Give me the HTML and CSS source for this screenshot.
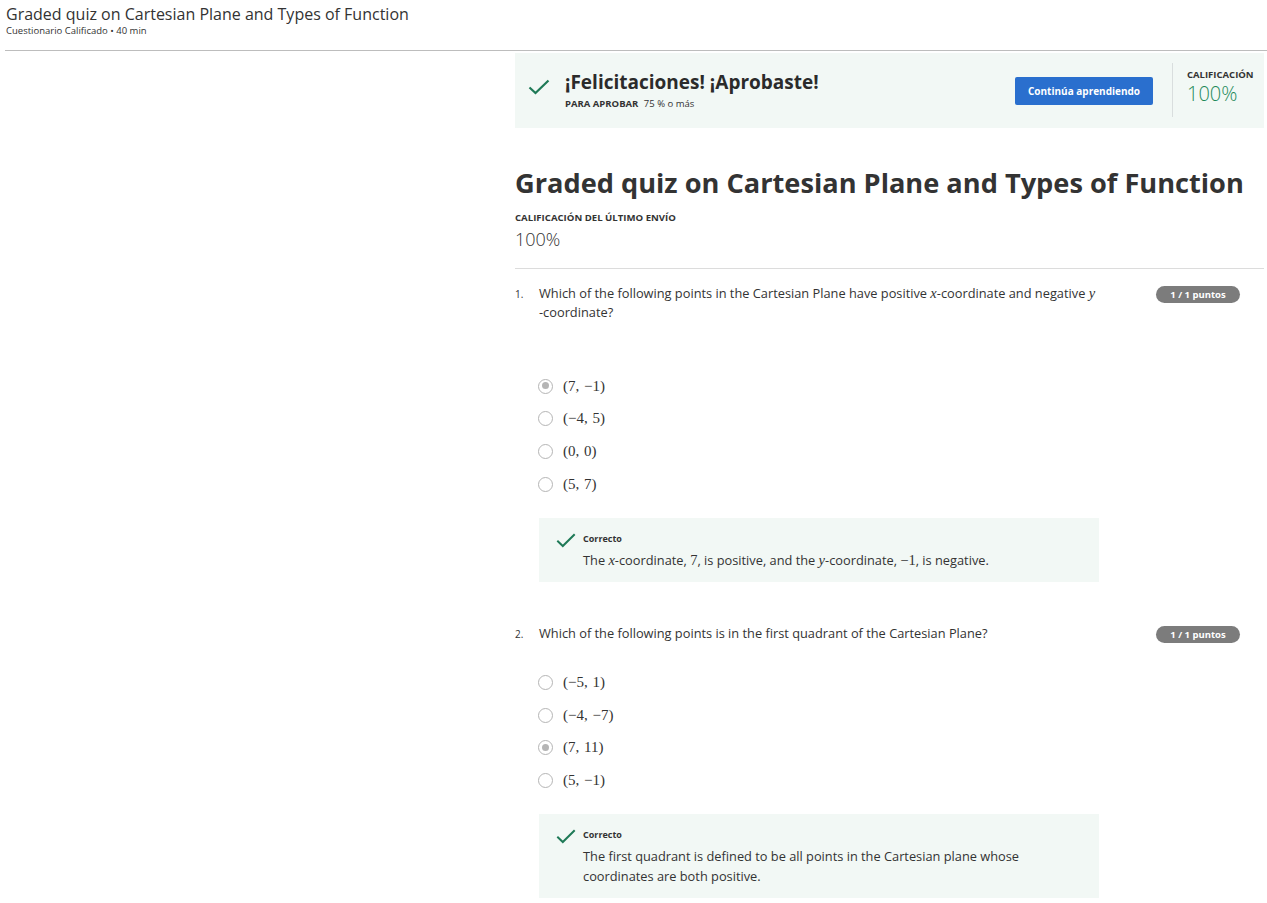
FILE: index.html
```html
<!DOCTYPE html>
<html lang="es">
<head>
<meta charset="utf-8">
<title>Graded quiz</title>
<link rel="stylesheet" href="styles.css">
</head>
<body>
<header class="topbar">
  <h1 class="top-title">Graded quiz on Cartesian Plane and Types of Function</h1>
  <div class="top-sub">Cuestionario Calificado • 40 min</div>
</header>
<main class="main">
  <section class="banner">
    <svg class="banner-check" width="22" height="16" viewBox="0 0 22 16"><path d="M1.5 8.5 L7.5 14 L20.5 1.5" fill="none" stroke="#1f7a57" stroke-width="2.2"/></svg>
    <div class="banner-text">
      <div class="banner-title">¡Felicitaciones! ¡Aprobaste!</div>
      <div class="banner-pass"><b>PARA APROBAR</b> 75 % o más</div>
    </div>
    <button class="btn">Continúa aprendiendo</button>
    <div class="banner-grade">
      <div class="label grade-label">CALIFICACIÓN</div>
      <div class="grade-val">100%</div>
    </div>
  </section>

  <h2 class="quiz-title">Graded quiz on Cartesian Plane and Types of Function</h2>
  <div class="label last-label">CALIFICACIÓN DEL ÚLTIMO ENVÍO</div>
  <div class="last-val">100%</div>

  <div class="questions">
    <section class="question q1">
      <div class="q-head">
        <span class="q-num">1.</span>
        <div class="q-text">Which of the following points in the Cartesian Plane have positive <span class="m"><i>x</i></span>-coordinate and negative <span class="m"><i>y</i></span><span class="nw">-coordinate?</span></div>
        <span class="badge">1 / 1 puntos</span>
      </div>
      <ul class="options">
        <li><span class="radio on"></span><span class="m">(7, −1)</span></li>
        <li><span class="radio"></span><span class="m">(−4, 5)</span></li>
        <li><span class="radio"></span><span class="m">(0, 0)</span></li>
        <li><span class="radio"></span><span class="m">(5, 7)</span></li>
      </ul>
      <div class="feedback">
        <svg class="fb-check" width="20" height="15" viewBox="0 0 20 15"><path d="M1.3 7.8 L6.8 13 L18.7 1.3" fill="none" stroke="#1f7a57" stroke-width="2"/></svg>
        <div class="fb-body">
          <div class="fb-label">Correcto</div>
          <div class="fb-text">The <span class="m"><i>x</i></span>-coordinate, <span class="m">7</span>, is positive, and the <span class="m"><i>y</i></span>-coordinate, <span class="m">−1</span>, is negative.</div>
        </div>
      </div>
    </section>

    <section class="question q2">
      <div class="q-head">
        <span class="q-num">2.</span>
        <div class="q-text">Which of the following points is in the first quadrant of the Cartesian Plane?</div>
        <span class="badge">1 / 1 puntos</span>
      </div>
      <ul class="options">
        <li><span class="radio"></span><span class="m">(−5, 1)</span></li>
        <li><span class="radio"></span><span class="m">(−4, −7)</span></li>
        <li><span class="radio on"></span><span class="m">(7, 11)</span></li>
        <li><span class="radio"></span><span class="m">(5, −1)</span></li>
      </ul>
      <div class="feedback">
        <svg class="fb-check" width="20" height="15" viewBox="0 0 20 15"><path d="M1.3 7.8 L6.8 13 L18.7 1.3" fill="none" stroke="#1f7a57" stroke-width="2"/></svg>
        <div class="fb-body">
          <div class="fb-label">Correcto</div>
          <div class="fb-text">The first quadrant is defined to be all points in the Cartesian plane whose coordinates are both positive.</div>
        </div>
      </div>
    </section>
  </div>
</main>
</body>
</html>
```

FILE: styles.css
```css
* { box-sizing: border-box; }
html, body { margin: 0; padding: 0; background: #fff; }
body {
  font-family: "Open Sans", "Noto Sans", sans-serif;
  color: #333;
  width: 1267px;
  height: 903px;
  overflow: hidden;
}
.topbar {
  margin: 0 0 0 5px;
  padding: 3px 0 0 1px;
  height: 51px;
  border-bottom: 1px solid #bdbdbd;
}
.top-title {
  margin: 0;
  font-size: 16px;
  font-weight: 400;
  line-height: 22px;
  color: #333;
}
.top-sub {
  font-size: 9.5px;
  line-height: 12px;
  color: #333;
}
.main {
  margin-left: 515px;
  width: 749px;
  padding-top: 2px;
}
.banner {
  display: flex;
  align-items: center;
  height: 75px;
  background: #f2f8f5;
  padding-left: 13px;
}
.banner-check { flex: none; margin-top: -7px; }
.banner-text { margin-left: 15px; flex: 1; margin-top: -2px; }
.banner-title {
  font-size: 19px;
  font-weight: 700;
  line-height: 26px;
  color: #2b2b2b;
}
.banner-pass {
  font-size: 9.5px;
  line-height: 14px;
  margin-top: 2px;
  color: #333;
}
.banner-pass b { font-weight: 700; margin-right: 3px; }
.btn {
  flex: none;
  width: 138px;
  height: 28px;
  border: 0;
  border-radius: 2px;
  background: #2a6fce;
  color: #fff;
  font-family: inherit;
  font-size: 10px;
  font-weight: 700;
  padding: 0;
}
.banner-grade {
  flex: none;
  width: 92px;
  height: 54px;
  margin-left: 19px;
  border-left: 1px solid #d9dede;
  padding-left: 14px;
  padding-top: 6px;
  align-self: flex-start;
  margin-top: 10px;
}
.label {
  font-size: 9.6px;
  font-weight: 700;
  line-height: 12px;
  color: #333;
}
.grade-label { font-size: 9.5px; }
.grade-val {
  font-size: 20px;
  font-weight: 300;
  line-height: 25px;
  color: #1f8a5a;
}
.quiz-title {
  margin: 36px 0 0;
  font-size: 27.2px;
  font-weight: 700;
  line-height: 38px;
  color: #333;
  white-space: nowrap;
}
.last-label { margin-top: 10px; }
.last-val {
  font-size: 18px;
  font-weight: 300;
  line-height: 24px;
  margin-top: 3px;
  padding-bottom: 17px;
  border-bottom: 1px solid #dcdcdc;
}
.question { padding-top: 15px; }
.q2 { padding-top: 42px; }
.q-head {
  display: flex;
  align-items: flex-start;
}
.q-num {
  width: 24px;
  flex: none;
  font-size: 10px;
  line-height: 20px;
}
.q-text {
  width: 585px;
  font-size: 12.8px;
  line-height: 19px;
  color: #333;
}
.nw { white-space: nowrap; }
.badge {
  margin-left: auto;
  margin-right: 24px;
  margin-top: 2px;
  flex: none;
  width: 84px;
  height: 17px;
  border-radius: 9px;
  background: #7c7c7c;
  color: #fff;
  font-size: 9.5px;
  font-weight: 700;
  line-height: 17px;
  text-align: center;
}
.m {
  display: inline-block;
  font-family: "Liberation Serif", "DejaVu Serif", serif;
  font-size: 14.5px;
  word-spacing: 1px;
}
.m i { font-style: italic; }
.options {
  list-style: none;
  margin: 0;
  padding: 46px 0 0 23px;
}
.q1 .options { padding-top: 48px; }
.q2 .options { padding-top: 22px; }
.options li {
  display: flex;
  align-items: center;
  height: 32.6px;
}
.options .m { font-size: 15px; }
.radio {
  width: 15px;
  height: 15px;
  border: 1.5px solid #b5b5b5;
  border-radius: 50%;
  margin-right: 10px;
  flex: none;
  position: relative;
}
.radio.on::after {
  content: "";
  position: absolute;
  left: 2.5px; top: 2.5px;
  width: 7px; height: 7px;
  border-radius: 50%;
  background: #b5b5b5;
}
.feedback {
  margin: 18px 0 0 24px;
  width: 560px;
  background: #f2f8f5;
  display: flex;
  align-items: flex-start;
  padding: 14px 60px 12px 17px;
}
.q2 .feedback { margin-top: 17px; }
.fb-check { flex: none; margin-top: 1px; }
.fb-body { margin-left: 7px; }
.fb-label {
  font-size: 9px;
  font-weight: 700;
  line-height: 14px;
}
.fb-text {
  font-size: 12.8px;
  line-height: 20px;
  margin-top: 4px;
  color: #333;
}
```
